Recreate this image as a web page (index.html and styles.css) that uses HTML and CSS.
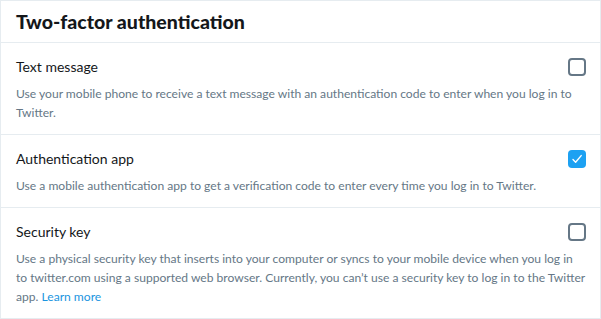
FILE: index.html
```html
<!DOCTYPE html>
<html>
<head>
<meta charset="utf-8">
<link rel="stylesheet" href="styles.css">
</head>
<body>
<section class="panel">
  <header class="panel-header">
    <h2 class="panel-title">Two-factor authentication</h2>
  </header>
  <div class="option">
    <div class="option-head">
      <span class="option-title">Text message</span>
      <span class="checkbox"></span>
    </div>
    <p class="option-desc">Use your mobile phone to receive a text message with an authentication code to enter when you log in to Twitter.</p>
  </div>
  <div class="option">
    <div class="option-head">
      <span class="option-title">Authentication app</span>
      <span class="checkbox checked"><svg viewBox="0 0 18 18" width="18" height="18"><path d="M5 9.6l2.6 2.6L13.2 5.6" fill="none" stroke="#fff" stroke-width="1.4" stroke-linecap="round" stroke-linejoin="round"/></svg></span>
    </div>
    <p class="option-desc">Use a mobile authentication app to get a verification code to enter every time you log in to Twitter.</p>
  </div>
  <div class="option">
    <div class="option-head">
      <span class="option-title">Security key</span>
      <span class="checkbox"></span>
    </div>
    <p class="option-desc">Use a physical security key that inserts into your computer or syncs to your mobile device when you log in to twitter.com using a supported web browser. Currently, you can’t use a security key to log in to the Twitter app. <a class="link" href="#">Learn more</a></p>
  </div>
</section>
</body>
</html>
```

FILE: styles.css
```css
* { box-sizing: border-box; }
html, body { margin: 0; padding: 0; background: #fff; }
body {
  font-family: Lato, "Open Sans", sans-serif;
  color: #14171a;
}
.panel {
  width: 601px;
  border: 1px solid #e6ecf0;
  display: flex;
  flex-direction: column;
}
.panel-header {
  flex-shrink: 0;
  height: 42px;
  border-bottom: 1px solid #e6ecf0;
  padding: 0 15px;
  display: flex;
  align-items: center;
}
.panel-title {
  margin: 0;
  font-size: 19.5px;
  font-weight: 900;
  line-height: 24px;
}
.option {
  flex-shrink: 0;
  padding: 14px 14px 12px 15px;
  border-bottom: 1px solid #e6ecf0;
}
.option:last-child { border-bottom: none; }
.option-head {
  display: flex;
  justify-content: space-between;
  align-items: center;
  height: 20px;
}
.option-title {
  font-size: 14px;
  line-height: 20px;
}
.checkbox {
  width: 18px;
  height: 18px;
  border: 2px solid #657786;
  border-radius: 4px;
  display: block;
}
.checkbox.checked {
  border: none;
  background: #1da1f2;
}
.checkbox svg { display: block; }
.option-desc {
  margin: 7px 0 0;
  font-size: 12.08px;
  line-height: 19px;
  color: #657786;
}
.link { color: #1b95e0; text-decoration: none; }
```
